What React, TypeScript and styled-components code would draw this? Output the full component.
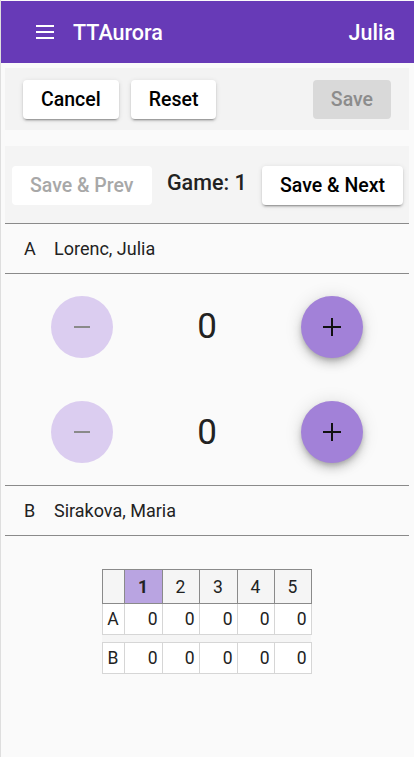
import React from "react";
import styled, { createGlobalStyle } from "styled-components";

const Global = createGlobalStyle`
  html, body { margin: 0; padding: 0; background: #fafafa; }
  body { font-family: Roboto, "Noto Sans", Arial, sans-serif; color: #212121; }
  * { box-sizing: border-box; }
`;

const Page = styled.div`
  width: 414px;
  min-height: 757px;
  border-left: 1px solid #dedede;
  padding-top: 1px;
  background: #fafafa;
`;

const AppBar = styled.header`
  height: 62px;
  background: #673ab7;
  display: flex;
  align-items: center;
  padding: 0 19px 0 34px;
  color: #fff;
`;

const Title = styled.div`
  font-size: 21.5px;
  font-weight: 500;
  margin-left: 18px;
  flex: 1;
`;

const User = styled.div`
  font-size: 21.5px;
  font-weight: 500;
`;

const Content = styled.main`
  padding: 5px 5px 0 4px;
`;

const Toolbar = styled.div`
  height: 62px;
  background: #f3f3f3;
  display: flex;
  align-items: center;
  padding: 0 18px 0 18px;
  gap: 12px;
`;

const Spacer = styled.div`
  flex: 1;
`;

const Btn = styled.button<{ $disabled?: boolean; $flat?: boolean; $filled?: boolean }>`
  height: 39px;
  padding: 0 18px;
  border: none;
  border-radius: 4px;
  font-family: Roboto, Arial, sans-serif;
  font-size: 19.5px;
  font-weight: 500;
  cursor: pointer;
  background: ${(p) => (p.$filled ? "#d9d9d9" : "#fff")};
  color: ${(p) => (p.$disabled ? (p.$filled ? "#8c8c8c" : "#a8a8a8") : "#000")};
  box-shadow: ${(p) =>
    p.$flat
      ? "none"
      : "0 3px 1px -2px rgba(0,0,0,0.2), 0 2px 2px 0 rgba(0,0,0,0.14), 0 1px 5px 0 rgba(0,0,0,0.12)"};
  white-space: nowrap;
`;

const GamePanel = styled.div`
  margin-top: 16px;
  height: 78px;
  background: #f4f4f4;
  display: flex;
  align-items: flex-start;
  justify-content: space-between;
  padding: 20px 6px 0 7px;
  border-bottom: 1px solid #8a8a8a;
`;

const GameLabel = styled.div`
  font-size: 21.5px;
  font-weight: 500;
  color: #222;
  line-height: 33px;
`;

const PlayerRow = styled.div`
  height: 50px;
  display: flex;
  align-items: center;
  padding: 0 0 1px 19px;
  border-bottom: 1px solid #8a8a8a;
  font-size: 18px;
  color: #222;
`;

const PlayerLetter = styled.span`
  width: 30px;
`;

const ScoreArea = styled.div`
  display: flex;
  flex-direction: column;
  border-bottom: 1px solid #8a8a8a;
`;

const ScoreRow = styled.div<{ $h: number }>`
  height: ${(p) => p.$h}px;
  display: flex;
  align-items: center;
  justify-content: space-between;
  padding: 0 46px 0 46px;
`;

const Round = styled.button<{ $plus?: boolean }>`
  width: 62px;
  height: 62px;
  border-radius: 50%;
  border: none;
  display: flex;
  align-items: center;
  justify-content: center;
  padding: 0;
  background: ${(p) => (p.$plus ? "#a281d8" : "#dbcdf0")};
  box-shadow: ${(p) =>
    p.$plus
      ? "0 3px 5px -1px rgba(0,0,0,0.2), 0 6px 10px 0 rgba(0,0,0,0.14), 0 1px 18px 0 rgba(0,0,0,0.12)"
      : "none"};
`;

const Score = styled.div`
  font-size: 35px;
  color: #222;
  width: 60px;
  text-align: center;
`;

const TableWrap = styled.div`
  display: flex;
  justify-content: center;
  padding: 33px 0 0 0;
`;

const Table = styled.table`
  border-collapse: collapse;
  margin-left: -1px;
  font-size: 17.5px;
  color: #222;
`;

const HeadCell = styled.th<{ $active?: boolean; $w: number }>`
  width: ${(p) => p.$w}px;
  height: 34px;
  padding: 0;
  border: 1px solid #8a8a8a;
  background: ${(p) => (p.$active ? "#b9a4e1" : "#f5f5f5")};
  font-weight: ${(p) => (p.$active ? 700 : 400)};
  text-align: center;
`;

const Cell = styled.td<{ $label?: boolean; $top?: boolean }>`
  height: 31px;
  padding: 0 ${(p) => (p.$label ? 0 : 4)}px 0 0;
  border: 1px solid #d6d6d6;
  border-top: ${(p) => (p.$top ? "1px solid #d6d6d6" : "none")};
  background: #fff;
  text-align: ${(p) => (p.$label ? "center" : "right")};
`;

const GapCell = styled.td`
  height: 8px;
  padding: 0;
  background: #f5f5f5;
`;

const Minus = () => (
  <svg width="18" height="4" viewBox="0 0 18 4">
    <rect x="1" y="1" width="16" height="2" fill="#8a8a8a" />
  </svg>
);

const Plus = () => (
  <svg width="20" height="20" viewBox="0 0 20 20">
    <rect x="1" y="9" width="18" height="2" fill="#111" />
    <rect x="9" y="1" width="2" height="18" fill="#111" />
  </svg>
);

const Menu = () => (
  <svg width="20" height="14" viewBox="0 0 20 14">
    <rect x="1" y="0" width="18" height="2" fill="#fff" />
    <rect x="1" y="6" width="18" height="2" fill="#fff" />
    <rect x="1" y="12" width="18" height="2" fill="#fff" />
  </svg>
);

const widths = [38, 37, 38, 37, 37];

export default function App() {
  return (
    <>
      <Global />
      <Page>
        <AppBar>
          <Menu />
          <Title>TTAurora</Title>
          <User>Julia</User>
        </AppBar>
        <Content>
          <Toolbar>
            <Btn>Cancel</Btn>
            <Btn>Reset</Btn>
            <Spacer />
            <Btn $disabled $flat $filled>Save</Btn>
          </Toolbar>
          <GamePanel>
            <Btn $disabled $flat>Save &amp; Prev</Btn>
            <GameLabel>Game: 1</GameLabel>
            <Btn>Save &amp; Next</Btn>
          </GamePanel>
          <PlayerRow>
            <PlayerLetter>A</PlayerLetter>
            <span>Lorenc, Julia</span>
          </PlayerRow>
          <ScoreArea>
            {[105, 106].map((h, i) => (
              <ScoreRow key={i} $h={h}>
                <Round>
                  <Minus />
                </Round>
                <Score>0</Score>
                <Round $plus>
                  <Plus />
                </Round>
              </ScoreRow>
            ))}
          </ScoreArea>
          <PlayerRow>
            <PlayerLetter>B</PlayerLetter>
            <span>Sirakova, Maria</span>
          </PlayerRow>
          <TableWrap>
            <Table>
              <thead>
                <tr>
                  <HeadCell $w={22}></HeadCell>
                  {widths.map((w, i) => (
                    <HeadCell key={i} $w={w} $active={i === 0}>
                      {i + 1}
                    </HeadCell>
                  ))}
                </tr>
              </thead>
              <tbody>
                <tr>
                  <Cell $label>A</Cell>
                  {widths.map((_, i) => (
                    <Cell key={i}>0</Cell>
                  ))}
                </tr>
                <tr>
                  <GapCell colSpan={6} />
                </tr>
                <tr>
                  <Cell $label $top>B</Cell>
                  {widths.map((_, i) => (
                    <Cell key={i} $top>0</Cell>
                  ))}
                </tr>
              </tbody>
            </Table>
          </TableWrap>
        </Content>
      </Page>
    </>
  );
}
